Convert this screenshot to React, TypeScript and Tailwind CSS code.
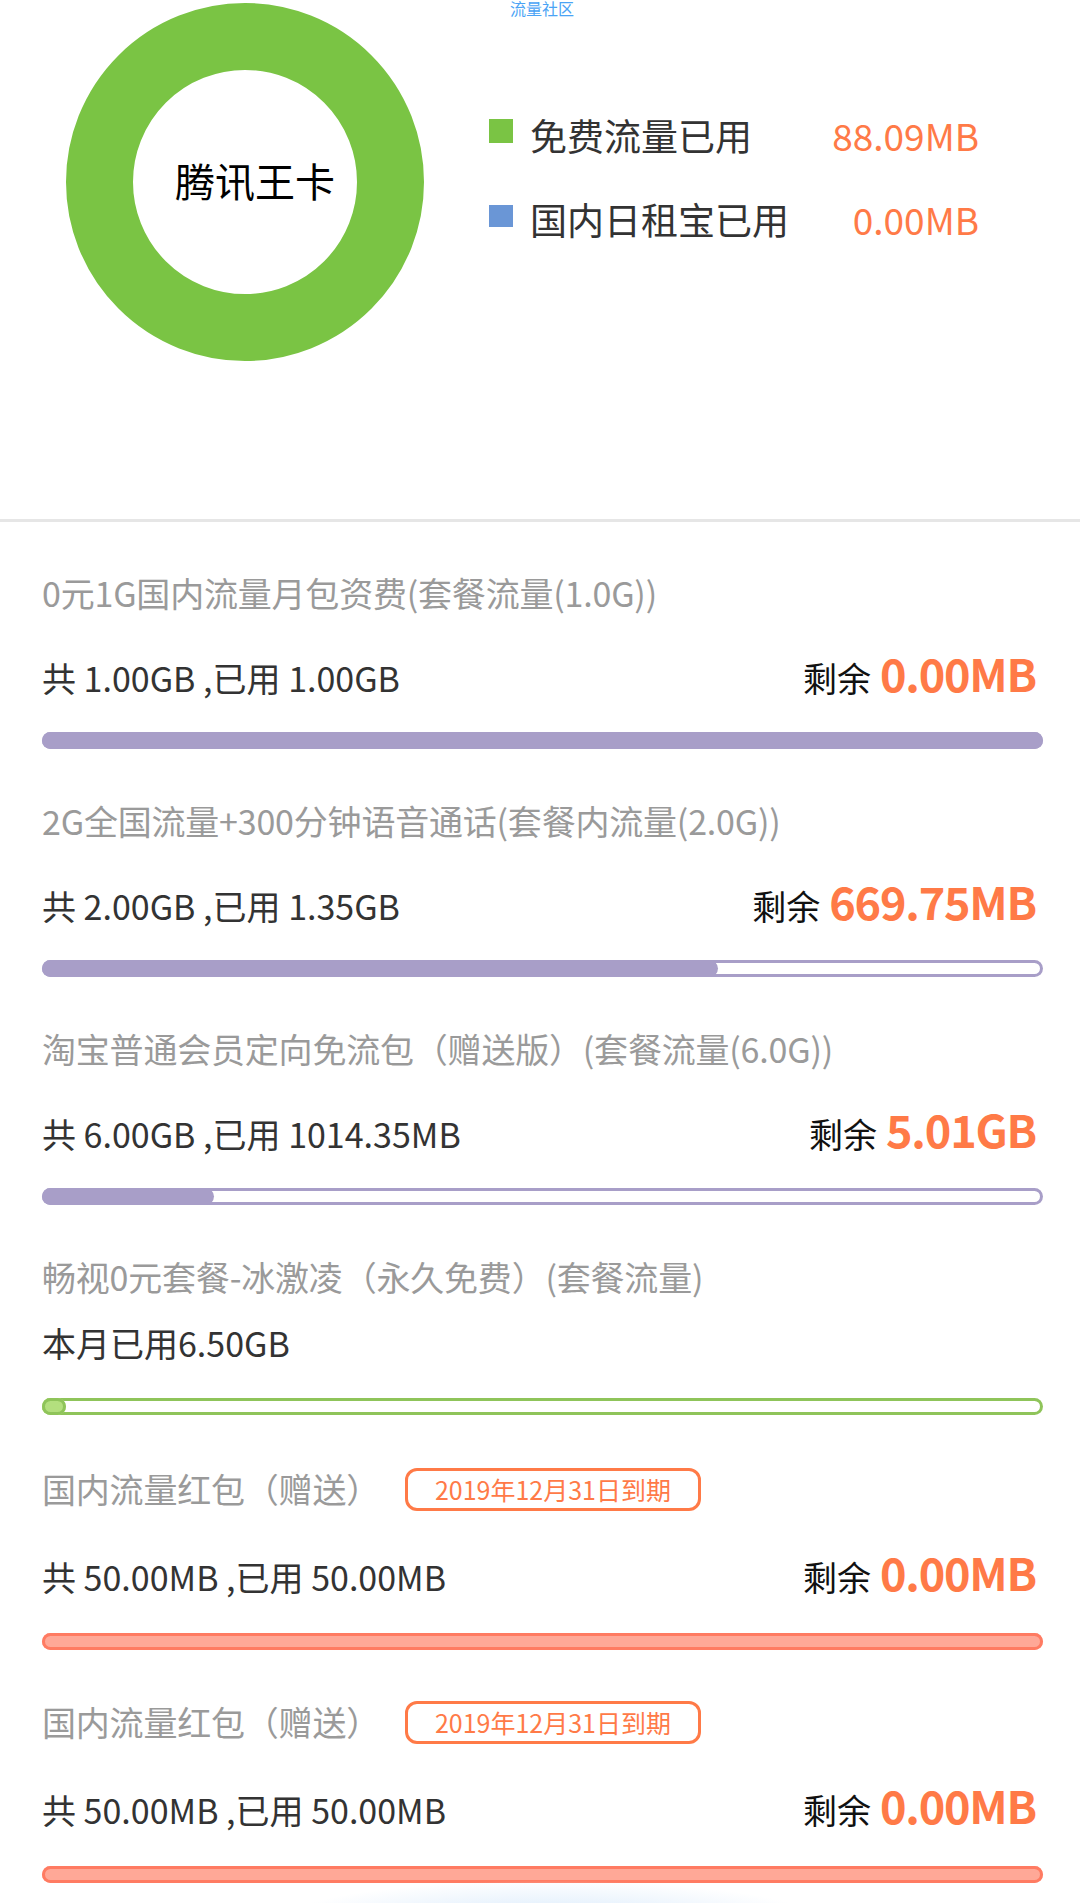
import React from "react";

type Item = {
  title: string;
  badge?: string;
  left: string;
  remain?: string;
  pct: number;
  kind: "purple" | "green" | "red";
  rowMt: string;
  barMt: string;
  mt: string;
};

const items: Item[] = [
  { title: "0元1G国内流量月包资费(套餐流量(1.0G))", left: "共 1.00GB ,已用 1.00GB", remain: "0.00MB", pct: 100, kind: "purple", rowMt: "mt-[30px]", barMt: "mt-[29px]", mt: "mt-0" },
  { title: "2G全国流量+300分钟语音通话(套餐内流量(2.0G))", left: "共 2.00GB ,已用 1.35GB", remain: "669.75MB", pct: 67.5, kind: "purple", rowMt: "mt-[30px]", barMt: "mt-[29px]", mt: "mt-[47px]" },
  { title: "淘宝普通会员定向免流包（赠送版）(套餐流量(6.0G))", left: "共 6.00GB ,已用 1014.35MB", remain: "5.01GB", pct: 17.2, kind: "purple", rowMt: "mt-[30px]", barMt: "mt-[29px]", mt: "mt-[47px]" },
  { title: "畅视0元套餐-冰激凌（永久免费）(套餐流量)", left: "本月已用6.50GB", pct: 0, kind: "green", rowMt: "mt-[16px]", barMt: "mt-[30px]", mt: "mt-[47px]" },
  { title: "国内流量红包（赠送）", badge: "2019年12月31日到期", left: "共 50.00MB ,已用 50.00MB", remain: "0.00MB", pct: 100, kind: "red", rowMt: "mt-[33px]", barMt: "mt-[31px]", mt: "mt-[49px]" },
  { title: "国内流量红包（赠送）", badge: "2019年12月31日到期", left: "共 50.00MB ,已用 50.00MB", remain: "0.00MB", pct: 100, kind: "red", rowMt: "mt-[33px]", barMt: "mt-[31px]", mt: "mt-[47px]" },
];

function Bar({ kind, pct }: { kind: Item["kind"]; pct: number }) {
  if (kind === "green") {
    return (
      <div className="h-[17px] rounded-full bg-white shadow-[inset_0_0_0_3px_#8fc45a]">
        <div className="h-full w-[24px] rounded-full bg-[#b3df7e] shadow-[inset_0_0_0_3px_#8fc45a]" />
      </div>
    );
  }
  if (kind === "red") {
    return (
      <div className="h-[17px] rounded-full bg-[#ffa897] shadow-[inset_0_0_0_3px_#ff7b62]" />
    );
  }
  return (
    <div className="h-[17px] rounded-full bg-white shadow-[inset_0_0_0_3px_#a89ec8]">
      <div className="h-full rounded-full bg-[#a89ec8]" style={{ width: `${pct}%` }} />
    </div>
  );
}

export default function App() {
  return (
    <div className="relative min-h-[1903px] overflow-hidden bg-white font-['Noto_Sans_CJK_SC','Noto_Sans',sans-serif]">
      {/* top chart area */}
      <div className="relative flex h-[519px]">
        <span className="absolute left-[510px] top-0 text-[16px] leading-none text-[#4aa3f5]">流量社区</span>
        <div className="ml-[66px] mt-[3px] flex h-[358px] w-[358px] items-center justify-center rounded-full border-[67px] border-[#7ac444]">
          <span className="pb-[5px] pl-[20px] text-[40px] leading-none text-black">腾讯王卡</span>
        </div>
        <div className="ml-[65px] mt-[110px] flex w-[490px] flex-col gap-[34px]">
          <div className="flex items-start">
            <div className="mt-[9px] h-[24px] w-[24px] bg-[#7ac444]" />
            <span className="ml-[17px] text-[37px] leading-[50px] text-[#333]">免费流量已用</span>
            <span className="ml-auto text-[37px] leading-[50px] text-[#ff7a47]">88.09MB</span>
          </div>
          <div className="flex items-start">
            <div className="mt-[11px] h-[22px] w-[24px] bg-[#6a96d6]" />
            <span className="ml-[17px] text-[37px] leading-[50px] text-[#333]">国内日租宝已用</span>
            <span className="ml-auto text-[37px] leading-[50px] text-[#ff7a47]">0.00MB</span>
          </div>
        </div>
      </div>
      <div className="h-[3px] bg-[#e6e6e6]" />

      {/* list */}
      <div className="pl-[42px] pr-[37px] pt-[46px]">
        {items.map((it, i) => (
          <div key={i} className={it.mt}>
            <div className="flex h-[50px] items-center">
              <span className="text-[34px] leading-[50px] tracking-[-0.2px] text-[#9a9a9a] whitespace-nowrap">{it.title}</span>
              {it.badge && (
                <span className="ml-[25px] flex h-[43px] w-[296px] items-center justify-center rounded-[12px] border-[3px] border-[#ff7a47] text-[25px] leading-none text-[#ff7a47]">
                  {it.badge}
                </span>
              )}
            </div>
            <div className={`${it.rowMt} flex items-baseline justify-between`}>
              <span className="text-[34px] leading-[50px] text-[#333] whitespace-pre">{it.left}</span>
              {it.remain && (
                <span className="flex items-baseline pr-[7px]">
                  <span className="text-[34px] leading-[50px] text-[#111]">剩余</span>
                  <span className="ml-[9px] text-[45px] font-bold leading-[50px] tracking-[-1.2px] text-[#ff7a47]">{it.remain}</span>
                </span>
              )}
            </div>
            <div className={it.barMt}>
              <Bar kind={it.kind} pct={it.pct} />
            </div>
          </div>
        ))}
      </div>

      {/* bottom glow */}
      <div className="pointer-events-none absolute left-[270px] top-[1880px] h-[90px] w-[560px] rounded-full bg-[radial-gradient(ellipse_at_center,#d6e8fb_0%,#e9f3fd_35%,rgba(255,255,255,0)_70%)]" />
    </div>
  );
}
